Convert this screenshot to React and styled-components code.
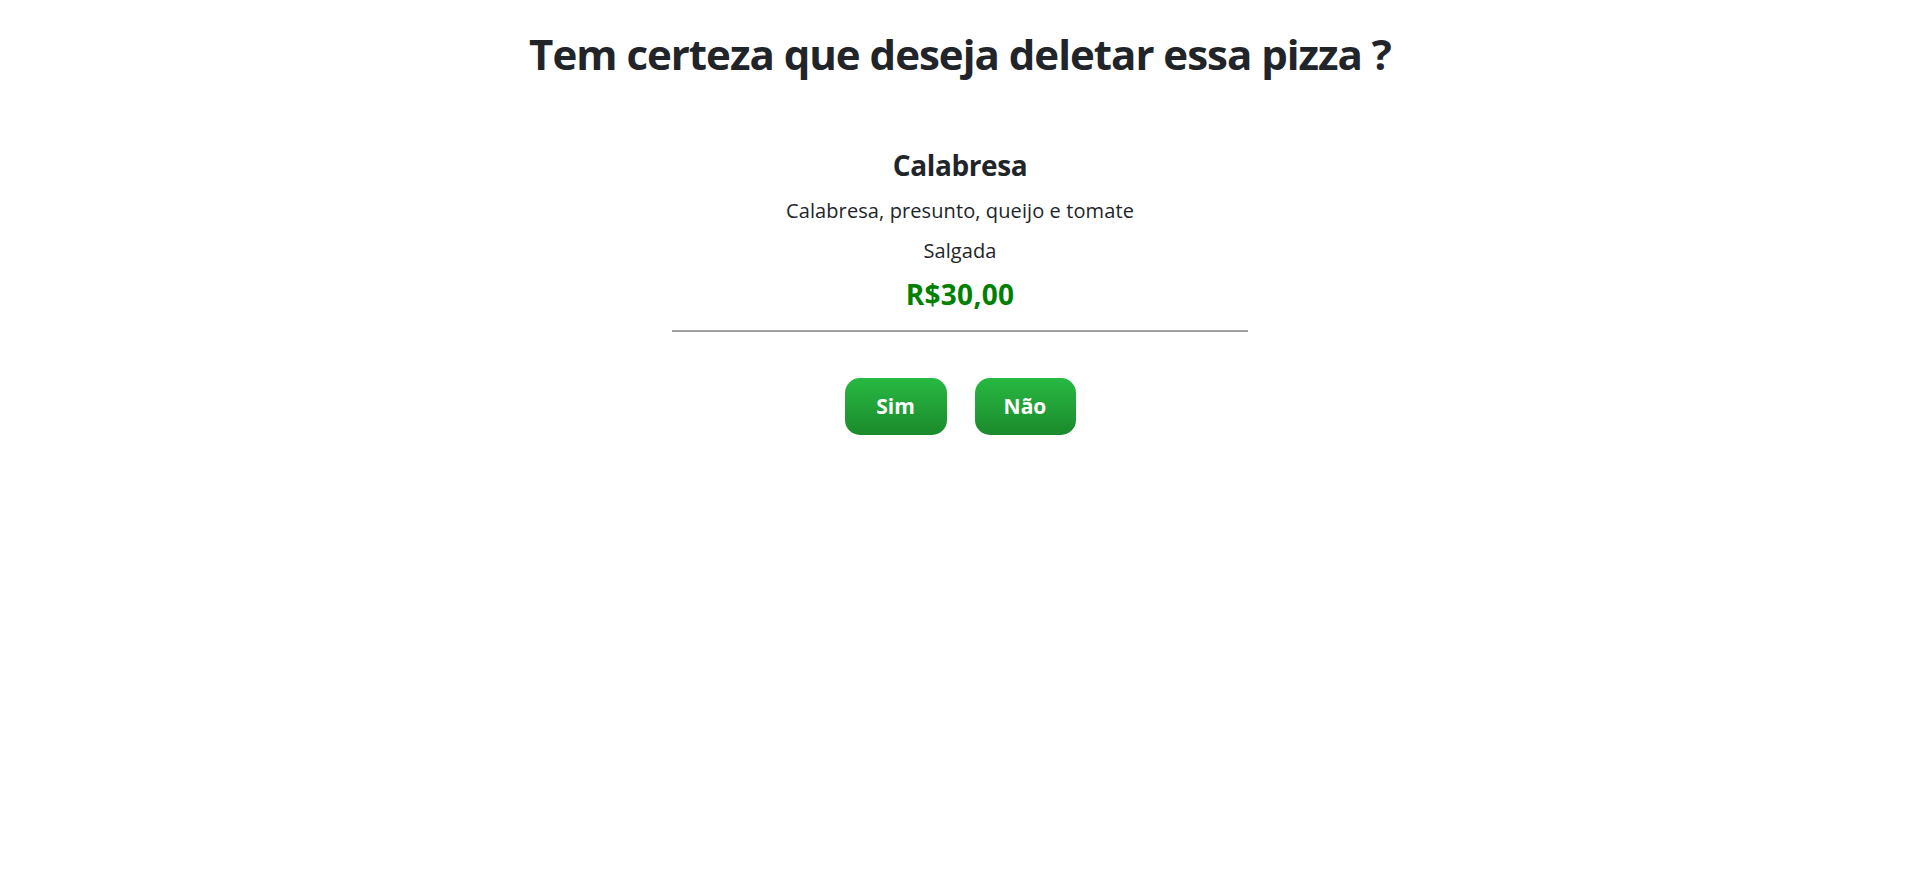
import React from "react";
import styled, { createGlobalStyle } from "styled-components";

const GlobalStyle = createGlobalStyle`
  body {
    margin: 0;
    background: #fff;
    color: #212529;
    font-family: "Open Sans", "Noto Sans", sans-serif;
  }
`;

const Page = styled.div`
  display: flex;
  flex-direction: column;
  align-items: center;
  padding-top: 29px;
`;

const Title = styled.h1`
  margin: 0 0 70px;
  font-size: 42px;
  font-weight: 700;
  line-height: 1.2;
  letter-spacing: -1px;
`;

const Card = styled.div`
  width: 576px;
  display: flex;
  flex-direction: column;
  align-items: center;
  border-bottom: 2px solid #a0a0a0;
  padding-bottom: 18px;
`;

const Name = styled.h2`
  margin: 0 0 13px;
  font-size: 28px;
  font-weight: 700;
  line-height: 1.2;
  letter-spacing: -0.4px;
`;

const Info = styled.p`
  margin: 0 0 ${({ $mb }) => $mb}px;
  font-size: 20px;
  line-height: 1.5;
  letter-spacing: 0.1px;
`;

const Price = styled.p`
  margin: 0;
  font-size: 28px;
  font-weight: 700;
  line-height: 1.2;
  color: green;
  letter-spacing: 0.3px;
`;

const Actions = styled.div`
  display: flex;
  gap: 28px;
  margin-top: 46px;
`;

const Button = styled.button`
  width: ${({ $w }) => $w}px;
  height: 57px;
  border: none;
  border-radius: 15px;
  background: linear-gradient(to bottom, #28b943, #1b8a2b);
  color: #fff;
  font-family: "Open Sans", "Noto Sans", sans-serif;
  font-size: 21px;
  font-weight: 700;
  cursor: pointer;
`;

const App = () => {
  return (
    <Page>
      <GlobalStyle />
      <Title>Tem certeza que deseja deletar essa pizza ?</Title>
      <Card>
        <Name>Calabresa</Name>
        <Info $mb={10}>Calabresa, presunto, queijo e tomate</Info>
        <Info $mb={12}>Salgada</Info>
        <Price>R$30,00</Price>
      </Card>
      <Actions>
        <Button $w={102}>Sim</Button>
        <Button $w={101}>Não</Button>
      </Actions>
    </Page>
  );
};

export default App;
